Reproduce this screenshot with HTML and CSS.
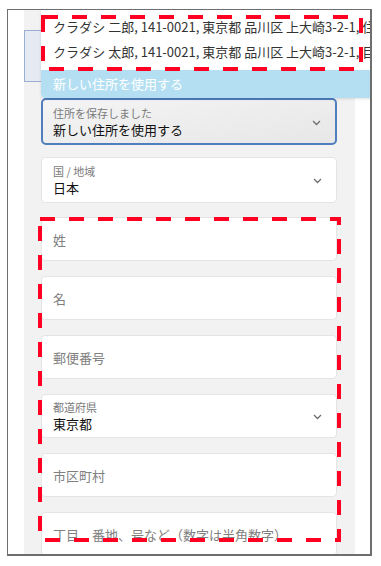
FILE: index.html
```html
<!DOCTYPE html>
<html lang="ja">
<head>
<meta charset="utf-8">
<title>住所入力</title>
<link rel="stylesheet" href="styles.css">
</head>
<body>
<div class="frame">
  <div class="panel">
    <div class="prev-box"></div>

    <div class="select saved">
      <div class="select-text">
        <span class="label">住所を保存しました</span>
        <span class="value">新しい住所を使用する</span>
      </div>
      <svg class="chev" width="9" height="6" viewBox="0 0 9 6"><polyline points="1,1 4.5,4.5 8,1" fill="none" stroke="#6f6f6f" stroke-width="1.3"/></svg>
    </div>

    <div class="select country">
      <div class="select-text">
        <span class="label">国 / 地域</span>
        <span class="value">日本</span>
      </div>
      <svg class="chev" width="9" height="6" viewBox="0 0 9 6"><polyline points="1,1 4.5,4.5 8,1" fill="none" stroke="#6f6f6f" stroke-width="1.3"/></svg>
    </div>

    <div class="fields">
      <div class="field"><span class="ph">姓</span></div>
      <div class="field"><span class="ph">名</span></div>
      <div class="field"><span class="ph">郵便番号</span></div>
      <div class="field select-field">
        <div class="select-text">
          <span class="label">都道府県</span>
          <span class="value">東京都</span>
        </div>
        <svg class="chev" width="9" height="6" viewBox="0 0 9 6"><polyline points="1,1 4.5,4.5 8,1" fill="none" stroke="#6f6f6f" stroke-width="1.3"/></svg>
      </div>
      <div class="field"><span class="ph">市区町村</span></div>
      <div class="field"><span class="ph">丁目、番地、号など（数字は半角数字）</span></div>
    </div>
  </div>

  <div class="dropdown">
    <div class="options">
      <div class="option">クラダシ 二郎, 141-0021, 東京都 品川区 上大崎3-2-1, 住</div>
      <div class="option">クラダシ 太郎, 141-0021, 東京都 品川区 上大崎3-2-1, 目</div>
    </div>
    <div class="option active">新しい住所を使用する</div>
  </div>

  <svg class="mark mark-top" width="322" height="56" viewBox="0 0 322 56"><rect x="2" y="2" width="318" height="52" fill="none" stroke="#ff0022" stroke-width="4" stroke-dasharray="15 14"/></svg>
  <svg class="mark mark-fields" width="303" height="325" viewBox="0 0 303 325"><rect x="2" y="2" width="299" height="321" fill="none" stroke="#ff0022" stroke-width="4" stroke-dasharray="15 14"/></svg>
</div>
</body>
</html>
```

FILE: styles.css
```css
* { box-sizing: border-box; }

html, body {
  margin: 0;
  padding: 0;
  background: #ffffff;
}

body {
  font-family: "Noto Sans CJK JP", "Noto Sans", sans-serif;
  color: #222;
}

.frame {
  position: relative;
  margin: 9px 0 0 7px;
  width: 365px;
  height: 547px;
  border-style: solid;
  border-color: #6e6e6e;
  border-width: 1px 2px 2px 1px;
  background: #ffffff;
  overflow: hidden;
}

.panel {
  margin-left: 16px;
  width: 331px;
  height: 100%;
  background: #f2f2f2;
  display: flex;
  flex-direction: column;
}

.prev-box {
  margin-top: 20px;
  width: 120px;
  height: 52px;
  border: 1px solid #9aaed0;
  background: #e6ebf3;
  flex: none;
}

.select,
.field {
  margin-left: 17px;
  width: 296px;
  border: 1px solid #e4e4e4;
  border-radius: 4px;
  background: #ffffff;
  display: flex;
  align-items: center;
  flex: none;
}

.select {
  justify-content: space-between;
  padding: 0 14px 0 11px;
}

.saved {
  margin-top: 16px;
  height: 47px;
  border: 2px solid #4f7dbd;
  border-radius: 5px;
  padding-left: 10px;
  background: linear-gradient(170deg, #f4f4f4, #e7e7e7);
}

.country {
  margin-top: 12px;
  height: 46px;
}

.select-text {
  display: flex;
  flex-direction: column;
}

.label {
  font-size: 11px;
  line-height: 15px;
  color: #7a7a7a;
}

.value {
  font-size: 13px;
  line-height: 17px;
  color: #111;
}

.chev {
  display: block;
  margin-top: 2px;
}

.fields {
  margin-top: 14px;
  display: flex;
  flex-direction: column;
  gap: 15px;
}

.field {
  height: 44px;
  padding: 0 11px;
}

.select-field {
  justify-content: space-between;
  padding-right: 14px;
}

.ph {
  font-size: 13px;
  color: #808080;
}

.dropdown {
  position: absolute;
  left: 33px;
  top: 0;
  width: 340px;
  background: #ffffff;
  border-radius: 0 0 4px 4px;
  box-shadow: 0 1px 3px rgba(0, 0, 0, 0.12);
  overflow: hidden;
}

.options {
  padding: 4px 0 6px;
}

.option {
  height: 25px;
  line-height: 25px;
  padding-left: 12px;
  font-size: 13px;
  color: #333;
  white-space: nowrap;
  overflow: hidden;
}

.option.active {
  height: 28px;
  line-height: 28px;
  background: #b4dff2;
  color: #ffffff;
  border-radius: 0 0 0 4px;
}

.mark {
  position: absolute;
  display: block;
}

.mark-top {
  left: 33px;
  top: 5px;
}

.mark-fields {
  left: 30px;
  top: 207px;
}
```
